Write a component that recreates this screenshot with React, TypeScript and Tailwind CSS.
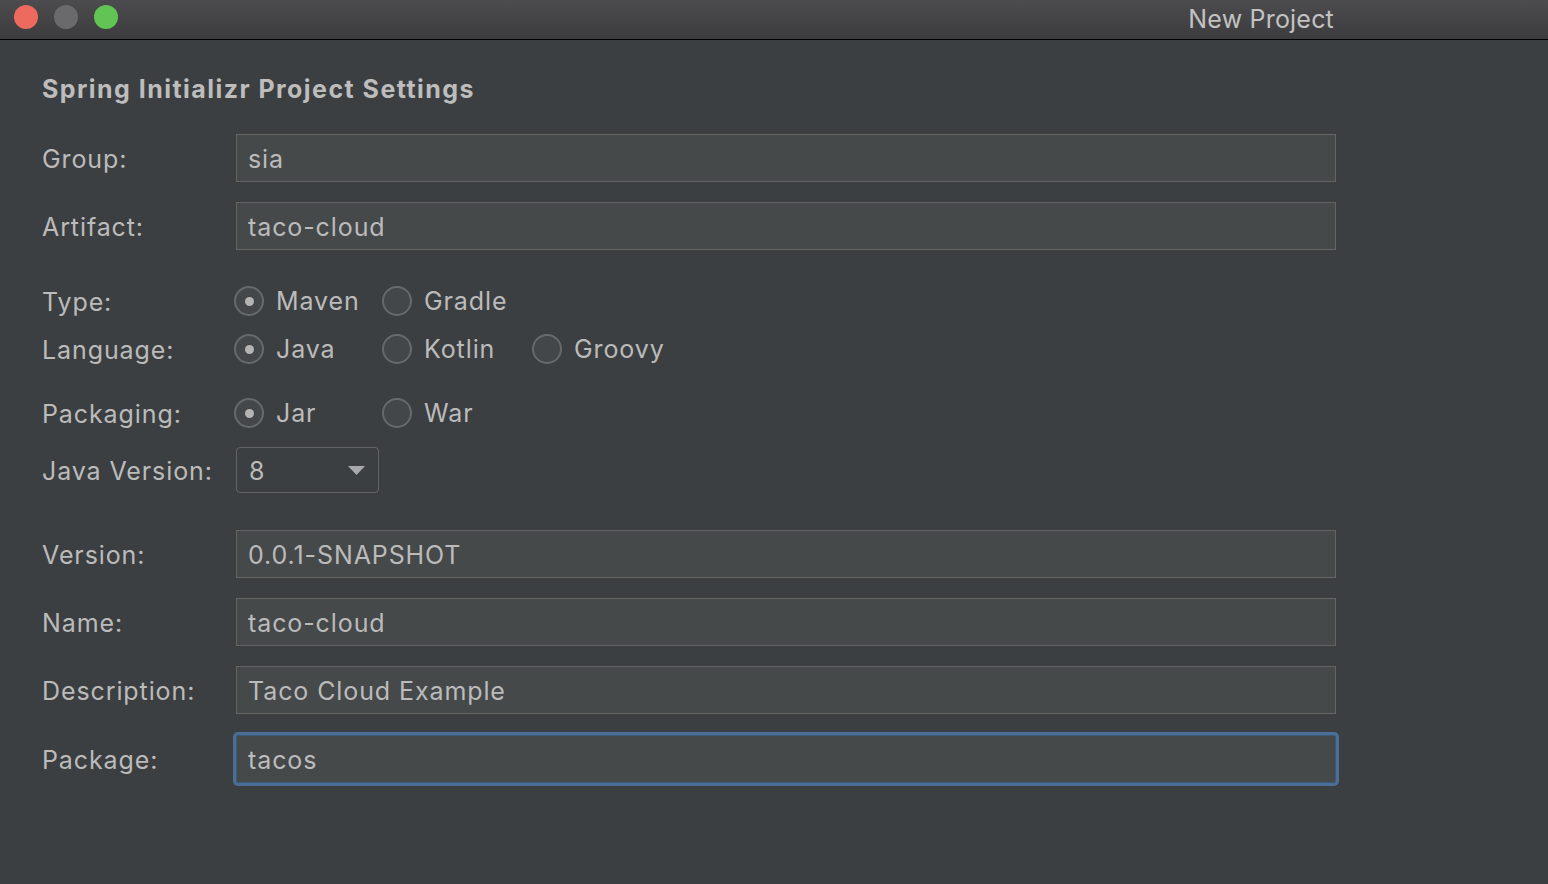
import React from "react";

const font = { fontFamily: "Inter, 'Noto Sans', sans-serif" };

function Label({ children }: { children: React.ReactNode }) {
  return (
    <div className="w-[236px] shrink-0 pl-[42px] pt-[3px] text-[25px] tracking-[0.9px] text-[#bbbbbb] whitespace-nowrap">
      {children}
    </div>
  );
}

function Field({ label, value, focused, mt }: { label: string; value: string; focused?: boolean; mt: string }) {
  return (
    <div className={`flex items-center ${mt}`}>
      <Label>{label}</Label>
      <div
        className={`w-[1100px] h-[48px] shrink-0 flex items-center pt-[3px] pl-[11px] pr-[12px] text-[25px] tracking-[0.9px] text-[#bbbbbb] bg-[#45494a] border ${
          focused
            ? "border-[#3a5a7c] rounded-[2px] shadow-[0_0_0_3px_#4a6e96]"
            : "border-[#646464]"
        }`}
      >
        {value}
      </div>
    </div>
  );
}

function Radio({ label, checked, width }: { label: string; checked?: boolean; width: string }) {
  return (
    <div className={`flex items-center shrink-0 ${width}`}>
      <div className="w-[30px] h-[30px] rounded-full border-2 border-[#676a6c] bg-[#43474a] flex items-center justify-center">
        {checked && <div className="w-[9px] h-[9px] rounded-full bg-[#b4b4b4]" />}
      </div>
      <span className="ml-[12px] pt-[2px] text-[25px] tracking-[0.9px] text-[#bbbbbb]">{label}</span>
    </div>
  );
}

function RadioRow({ label, mt, children }: { label: string; mt: string; children: React.ReactNode }) {
  return (
    <div className={`flex items-center h-[30px] ${mt}`}>
      <Label>{label}</Label>
      <div className="flex items-center -ml-[2px]">{children}</div>
    </div>
  );
}

export default function App() {
  return (
    <div className="w-[1548px] h-[884px] bg-[#3c3f41] overflow-hidden" style={font}>
      <div className="h-[40px] border-b border-black bg-gradient-to-b from-[#4c4c4e] to-[#3c3c3e] flex items-center">
        <div className="flex items-center gap-[16px] pl-[14px] -mt-[5px]">
          <div className="w-[24px] h-[24px] rounded-full bg-[#ee6a5f]" />
          <div className="w-[24px] h-[24px] rounded-full bg-[#6a6a6c]" />
          <div className="w-[24px] h-[24px] rounded-full bg-[#62c454]" />
        </div>
        <div className="flex-1 flex justify-end pr-[214px] text-[25px] tracking-[0.2px] text-[#c2c2c2]">New Project</div>
      </div>

      <div className="mt-[29px] h-[40px] flex items-center pl-[42px] pt-[2px] text-[25px] font-bold text-[#bdbdbd] tracking-[1.45px]">
        Spring Initializr Project Settings
      </div>

      <Field label="Group:" value="sia" mt="mt-[25px]" />
      <Field label="Artifact:" value="taco-cloud" mt="mt-[20px]" />

      <RadioRow label="Type:" mt="mt-[36px]">
        <Radio label="Maven" checked width="w-[148px]" />
        <Radio label="Gradle" width="w-[150px]" />
      </RadioRow>
      <RadioRow label="Language:" mt="mt-[18px]">
        <Radio label="Java" checked width="w-[148px]" />
        <Radio label="Kotlin" width="w-[150px]" />
        <Radio label="Groovy" width="w-[150px]" />
      </RadioRow>
      <RadioRow label="Packaging:" mt="mt-[34px]">
        <Radio label="Jar" checked width="w-[148px]" />
        <Radio label="War" width="w-[150px]" />
      </RadioRow>

      <div className="flex items-center mt-[19px]">
        <Label>Java Version:</Label>
        <div className="w-[143px] h-[46px] shrink-0 rounded-[4px] border border-[#646464] flex items-center justify-between pl-[12px] pr-[13px] text-[25px] text-[#bbbbbb]">
          <span className="pt-[3px]">8</span>
          <svg width="17" height="9" viewBox="0 0 17 9">
            <path d="M0 0 L17 0 L8.5 9 Z" fill="#a7a9ab" />
          </svg>
        </div>
      </div>

      <Field label="Version:" value="0.0.1-SNAPSHOT" mt="mt-[37px]" />
      <Field label="Name:" value="taco-cloud" mt="mt-[20px]" />
      <Field label="Description:" value="Taco Cloud Example" mt="mt-[20px]" />
      <Field label="Package:" value="tacos" focused mt="mt-[21px]" />
    </div>
  );
}
